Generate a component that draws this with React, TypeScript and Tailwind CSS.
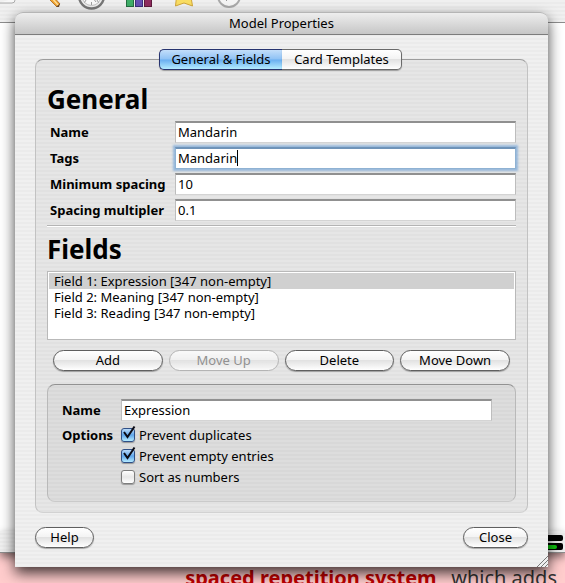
import { useState } from "react";
import type { ReactNode } from "react";

const stripes =
  "bg-[repeating-linear-gradient(to_bottom,#f0f0f0_0px,#f0f0f0_2px,#ebebeb_2px,#ebebeb_4px)]";

const aqua =
  "bg-[linear-gradient(to_bottom,#ffffff_0%,#f4f4f4_45%,#e2e2e2_50%,#f0f0f0_75%,#ffffff_100%)]";

const fieldBox =
  "h-[22px] min-w-0 border border-t-2 border-[#bdbdbd] border-t-[#909090] border-b-[#d4d4d4] bg-white px-[2px] pb-[2px] text-[13px] leading-none text-black outline-none";

function PushButton({
  children,
  disabled = false,
  className,
}: {
  children: ReactNode;
  disabled?: boolean;
  className: string;
}) {
  return (
    <button
      type="button"
      disabled={disabled}
      className={`flex h-[21px] items-center justify-center rounded-full border text-[13px] leading-none ${aqua} ${
        disabled
          ? "border-[#a9a9a9] text-[#7c7c7c] opacity-80"
          : "border-[#5f5f5f] text-black shadow-[0_1px_1px_rgba(0,0,0,0.3)]"
      } ${className}`}
    >
      {children}
    </button>
  );
}

function TextRow({ id, label, value }: { id: string; label: string; value: string }) {
  return (
    <>
      <label htmlFor={id} className="pl-[3px] font-bold">
        {label}
      </label>
      <input id={id} type="text" defaultValue={value} className={fieldBox} />
    </>
  );
}

function CheckOption({ label, initial }: { label: string; initial: boolean }) {
  const [on, setOn] = useState(initial);
  return (
    <label className="flex h-[21px] items-center gap-1">
      <span className="relative block size-[14px]">
        <input
          type="checkbox"
          checked={on}
          onChange={(e) => setOn(e.target.checked)}
          className="block size-[14px] appearance-none rounded-[3px] border border-[#7d7d7d] bg-linear-to-b from-white via-[#e8e8e8] to-white shadow-[0_1px_1px_rgba(0,0,0,0.3)] checked:border-[#2f4f86] checked:from-[#b9d9f8] checked:via-[#5fa5ea] checked:to-[#b5ebff]"
        />
        {on && (
          <svg
            viewBox="0 0 16 16"
            className="pointer-events-none absolute -top-[3px] left-0 size-4"
            aria-hidden="true"
          >
            <path d="M3 7L6.500 12L13.500 1.500" fill="none" stroke="#0a0a14" strokeWidth="2" />
          </svg>
        )}
      </span>
      {label}
    </label>
  );
}

function ToolbarIcons() {
  return (
    <svg width="260" height="12" viewBox="0 0 260 12" className="block" aria-hidden="true">
      <path d="M-2 3H12Q15 3 15 0V-2" fill="#f7f7f7" stroke="#aaa" />
      <path d="M47 -3L52 -5L60 4L57 7Z" fill="#f0a22e" stroke="#a5641c" strokeWidth="0.8" />
      <path d="M51 -3L58 5" stroke="#ffe09a" strokeWidth="1.4" />
      <path d="M56 7L60 3.500L59 7Z" fill="#6b4a2b" />
      <circle cx="91.500" cy="-4" r="12.500" fill="#eeeeee" stroke="#777" strokeWidth="2.4" />
      <circle cx="91.500" cy="-4" r="9.500" fill="#f8f8f8" stroke="#b5b5b5" strokeWidth="0.8" />
      <path d="M91.500 2V5M86 0L84.500 2.500M97 0L98.500 2.500M91.500 -4L96 2" stroke="#888" strokeWidth="0.8" />
      <rect x="126.500" y="-3" width="7" height="9.500" fill="#3fae68" stroke="#256d42" />
      <rect x="135.500" y="-3" width="7" height="9.500" fill="#6650b4" stroke="#3c2f7c" />
      <rect x="144.500" y="-3" width="7" height="9.500" fill="#8f2c5f" stroke="#5d1b3d" />
      <path d="M176.500 -3L175.500 6L184 3L192.500 6L191 -3Z" fill="#f9dd62" stroke="#d0a63a" />
      <circle cx="229" cy="-4" r="11" fill="#f4f4f4" stroke="#a9a9a9" strokeWidth="2" />
      <path d="M226 1L229 -2" stroke="#999" />
    </svg>
  );
}

function Backdrop() {
  return (
    <div className="absolute inset-0 flex flex-col overflow-hidden bg-[#ffcccc]" aria-hidden="true">
      <div className={`h-[23px] shrink-0 border-b border-[#8c8c8c] ${stripes}`}>
        <ToolbarIcons />
      </div>
      <div className="flex-1 bg-white" />
      <div
        className={`flex h-[22px] shrink-0 items-start justify-end border-b border-[#8a8a8a] pt-1 pr-[2px] shadow-[0_4px_8px_rgba(0,0,0,0.5)] ${stripes}`}
      >
        <div className="flex w-6 flex-col gap-[2px]">
          <span className="h-[6px] rounded-xs bg-black" />
          <span className="flex h-[7px] items-center rounded-xs bg-black pr-[6px]">
            <span className="h-[4px] flex-1 rounded-xs bg-[#0fc40f]" />
          </span>
        </div>
      </div>
      <div className="flex h-[30px] shrink-0 items-start justify-end gap-1 overflow-hidden pt-[11px] pr-2 text-[20px] leading-[28px] whitespace-pre text-[#333]">
        <span className="font-bold text-[#c00000]">spaced repetition system</span>
        <span>, which adds</span>
      </div>
    </div>
  );
}

export default function App() {
  return (
    <div className="relative min-h-screen overflow-hidden pt-3 pr-[17px] pb-4 pl-[15px] font-['Noto_Sans','Lucida_Grande',sans-serif] text-[13px] leading-[22px] text-black">
      <Backdrop />

      <main
        className={`relative rounded-t-lg pb-[19px] shadow-[0_6px_14px_rgba(0,0,0,0.75)] ${stripes}`}
      >
        <header className="flex h-[23px] items-center justify-center rounded-t-lg border-t border-b border-t-[#b5b5b5] border-b-[#7c7c7c] bg-linear-to-b from-[#eeeeee] to-[#c6c6c6] pb-[2px]">
          <h1>Model Properties</h1>
        </header>

        <div className="px-5 pt-[14px]">
          <div className="relative z-10 flex justify-center pr-[2px]" role="tablist">
            <button
              type="button"
              role="tab"
              aria-selected="true"
              className="flex h-[21px] w-[123px] items-center justify-center rounded-l-[5px] border border-r-0 border-[#27346f] bg-[linear-gradient(to_bottom,#c3defa_0%,#8fc2f5_48%,#69aef0_52%,#b4ecff_100%)] text-[13px] leading-none shadow-[0_1px_1px_rgba(0,0,0,0.3)]"
            >
              General &amp; Fields
            </button>
            <button
              type="button"
              role="tab"
              aria-selected="false"
              className={`flex h-[21px] w-[120px] items-center justify-center rounded-r-[5px] border border-l-0 border-[#6a6a6a] text-[13px] leading-none shadow-[0_1px_1px_rgba(0,0,0,0.3)] ${aqua}`}
            >
              Card Templates
            </button>
          </div>

          <section className="-mt-[11px] rounded-lg border border-[#c2c2c2] border-t-[#9c9c9c] border-b-[#d2d2d2] bg-black/4 px-[11px] pt-[21px] pb-[10px]">
            <h2 className="text-[26px] leading-[36px] font-bold">General</h2>
            <div className="mt-1 grid grid-cols-[124px_1fr] items-center gap-x-1 gap-y-1">
              <TextRow id="model-name" label="Name" value="Mandarin" />
              <label htmlFor="model-tags" className="pl-[3px] font-bold">
                Tags
              </label>
              <div className="flex h-[22px] items-center border border-t-2 border-[#8fb2d3] border-t-[#6f93b8] bg-white px-[2px] pb-[2px] shadow-[0_0_2px_2px_rgba(125,170,215,0.75)]">
                <input
                  id="model-tags"
                  type="text"
                  defaultValue="Mandarin"
                  className="field-sizing-content text-[13px] leading-none caret-transparent outline-none"
                />
                <span className="h-4 w-px bg-black" />
              </div>
              <TextRow id="min-spacing" label="Minimum spacing" value="10" />
              <TextRow id="multiplier" label="Spacing multipler" value="0.1" />
            </div>
            <hr className="mt-1 h-[2px] border-t border-b border-t-[#b4b4b4] border-b-white" />

            <h2 className="mt-1 text-[26px] leading-[36px] font-bold">Fields</h2>
            <ul className="mt-1 h-[69px] border border-[#b9b9b9] bg-white p-px text-[13px] leading-4">
              <li className="bg-[#d0d0d0] px-[5px]">Field 1: Expression [347 non-empty]</li>
              <li className="px-[5px]">Field 2: Meaning [347 non-empty]</li>
              <li className="px-[5px]">Field 3: Reading [347 non-empty]</li>
            </ul>

            <div className="mt-[10px] grid grid-cols-4 gap-[6px] px-[6px]">
              <PushButton className="w-full">Add</PushButton>
              <PushButton className="w-full" disabled>
                Move Up
              </PushButton>
              <PushButton className="w-full">Delete</PushButton>
              <PushButton className="w-full">Move Down</PushButton>
            </div>

            <div className="mt-[13px] grid grid-cols-[55px_1fr] gap-x-1 gap-y-[3px] rounded-lg border border-[#b9b9b9] border-t-[#929292] border-b-[#cacaca] bg-black/4 pt-[14px] pr-[23px] pb-[14px] pl-[14px]">
              <label htmlFor="field-name" className="font-bold">
                Name
              </label>
              <input id="field-name" type="text" defaultValue="Expression" className={fieldBox} />
              <span className="font-bold">Options</span>
              <div className="flex flex-col items-start">
                <CheckOption label="Prevent duplicates" initial={true} />
                <CheckOption label="Prevent empty entries" initial={true} />
                <CheckOption label="Sort as numbers" initial={false} />
              </div>
            </div>
          </section>

          <footer className="mt-[14px] flex justify-between">
            <PushButton className="w-[59px]">Help</PushButton>
            <PushButton className="w-[65px]">Close</PushButton>
          </footer>
        </div>

        <svg
          width="12"
          height="12"
          viewBox="0 0 12 12"
          className="absolute right-0 bottom-0"
          aria-hidden="true"
        >
          <path d="M1 12L12 1M5 12L12 5M9 12L12 9" stroke="#777" fill="none" />
        </svg>
      </main>
    </div>
  );
}
